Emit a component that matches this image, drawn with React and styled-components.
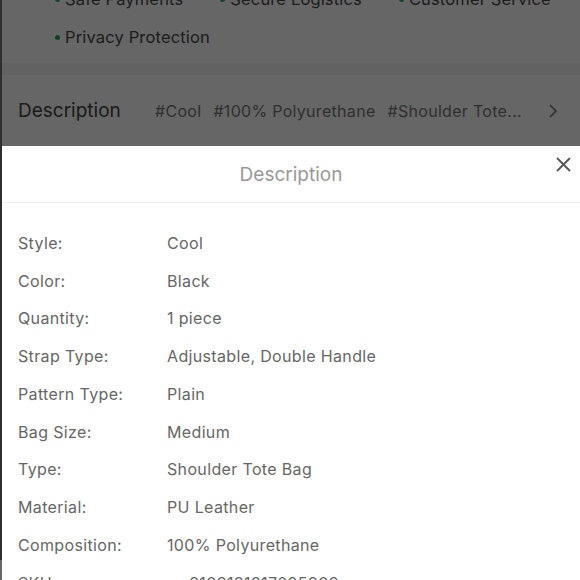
import React from 'react'
import styled, { createGlobalStyle } from 'styled-components'

const GlobalStyle = createGlobalStyle`
  html, body {
    margin: 0;
    padding: 0;
    background: #fff;
    font-family: Inter, "Noto Sans", "Liberation Sans", sans-serif;
    overflow: hidden;
  }
`

const services = ['Safe Payments', 'Secure Logistics', 'Customer Service', 'Privacy Protection']
const tags = ['#Cool', '#100% Polyurethane', '#Shoulder Tote...']

const specs = [
  ['Style:', 'Cool'],
  ['Color:', 'Black'],
  ['Quantity:', '1 piece'],
  ['Strap Type:', 'Adjustable, Double Handle'],
  ['Pattern Type:', 'Plain'],
  ['Bag Size:', 'Medium'],
  ['Type:', 'Shoulder Tote Bag'],
  ['Material:', 'PU Leather'],
  ['Composition:', '100% Polyurethane'],
  ['SKU:', 'sw2109181317095909'],
]

const Page = styled.div`
  width: 578px;
  height: 580px;
  border-left: 2px solid #777;
  background: #fff;
`

const Services = styled.ul`
  list-style: none;
  margin: 0;
  padding: 0 20px 0 53px;
  margin-top: -20px;
  display: flex;
  flex-wrap: wrap;
  column-gap: 37px;
  height: 83px;
  align-content: flex-start;
`

const Service = styled.li`
  display: flex;
  align-items: center;
  height: 38px;
  font-size: 16.5px;
  letter-spacing: 0.15px;
  color: #4a4a4a;

  &::before {
    content: '';
    width: 5px;
    height: 5px;
    border-radius: 50%;
    background: #25a862;
    margin-right: 5px;
  }
`

const Band = styled.div`
  height: 12px;
  background: #f5f5f5;
`

const DescRow = styled.div`
  height: 71px;
  display: flex;
  align-items: center;
  padding: 0 22px 0 16px;
`

const DescTitle = styled.span`
  font-size: 19px;
  color: #444;
  width: 137px;
  flex-shrink: 0;
`

const Tags = styled.div`
  display: flex;
  gap: 12px;
  flex: 1;
  font-size: 16px;
  letter-spacing: 0.3px;
  color: #777;
  white-space: nowrap;
`

const Chevron = styled.svg`
  width: 10px;
  height: 16px;
`

const Overlay = styled.div`
  position: fixed;
  inset: 0;
  background: rgba(0, 0, 0, 0.6);
`

const Sheet = styled.div`
  position: fixed;
  top: 146px;
  left: 2px;
  right: 0;
  bottom: 0;
  background: #fff;
`

const SheetHeader = styled.div`
  height: 56px;
  display: flex;
  align-items: center;
  justify-content: center;
  border-bottom: 1px solid #f0f0f0;
  position: relative;
`

const SheetTitle = styled.h2`
  margin: 0;
  font-weight: 400;
  font-size: 19px;
  color: #999;
`

const Close = styled.button`
  position: absolute;
  top: 9px;
  right: 8px;
  width: 18px;
  height: 18px;
  padding: 0;
  border: 0;
  background: none;
  display: flex;
  align-items: center;
  justify-content: center;
`

const SpecList = styled.dl`
  margin: 0;
  padding: 21px 0 0 16px;
`

const SpecRow = styled.div`
  display: flex;
  align-items: center;
  height: 37.75px;
  font-size: 16px;
  letter-spacing: 0.35px;
  color: #666;
`

const Label = styled.dt`
  width: 149px;
`

const Value = styled.dd`
  margin: 0;
`

export default function App() {
  return (
    <>
      <GlobalStyle />
      <Page>
        <Services>
          {services.map(s => <Service key={s}>{s}</Service>)}
        </Services>
        <Band />
        <DescRow>
          <DescTitle>Description</DescTitle>
          <Tags>
            {tags.map(t => <span key={t}>{t}</span>)}
          </Tags>
          <Chevron viewBox="0 0 10 16">
            <path d="M2 2l6 6-6 6" fill="none" stroke="#777" strokeWidth="1.6" />
          </Chevron>
        </DescRow>
      </Page>
      <Overlay />
      <Sheet>
        <SheetHeader>
          <SheetTitle>Description</SheetTitle>
          <Close aria-label="close">
            <svg width="15" height="15" viewBox="0 0 15 15">
              <path d="M1 1l13 13M14 1L1 14" stroke="#555" strokeWidth="1.8" />
            </svg>
          </Close>
        </SheetHeader>
        <SpecList>
          {specs.map(([k, v]) => (
            <SpecRow key={k}>
              <Label>{k}</Label>
              <Value>{v}</Value>
            </SpecRow>
          ))}
        </SpecList>
      </Sheet>
    </>
  )
}
